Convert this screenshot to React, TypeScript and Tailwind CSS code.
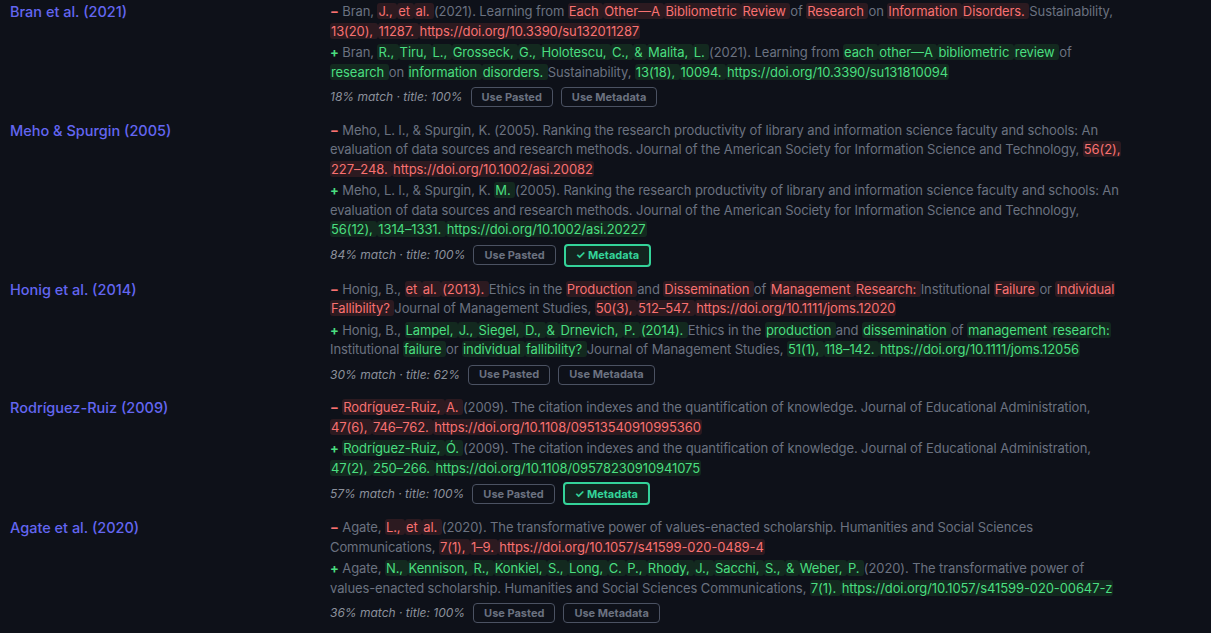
import React from 'react';

type Seg = [string, boolean];

interface Entry {
  label: string;
  removed: Seg[];
  added: Seg[];
  match: string;
  picked: 'metadata' | null;
}

const entries: Entry[] = [
  {
    label: 'Bran et al. (2021)',
    removed: [
      ['Bran, ', false],
      ['J., et al. ', true],
      ['(2021). Learning from ', false],
      ['Each Other—A Bibliometric Review ', true],
      ['of ', false],
      ['Research ', true],
      ['on ', false],
      ['Information Disorders. ', true],
      ['Sustainability, ', false],
      ['13(20), 11287. https://doi.org/10.3390/su132011287', true],
    ],
    added: [
      ['Bran, ', false],
      ['R., Tiru, L., Grosseck, G., Holotescu, C., & Malita, L. ', true],
      ['(2021). Learning from ', false],
      ['each other—A bibliometric review ', true],
      ['of ', false],
      ['research ', true],
      ['on ', false],
      ['information disorders. ', true],
      ['Sustainability, ', false],
      ['13(18), 10094. https://doi.org/10.3390/su131810094', true],
    ],
    match: '18% match · title: 100%',
    picked: null,
  },
  {
    label: 'Meho & Spurgin (2005)',
    removed: [
      [
        'Meho, L. I., & Spurgin, K. (2005). Ranking the research productivity of library and information science faculty and schools: An evaluation of data sources and research methods. Journal of the American Society for Information Science and Technology, ',
        false,
      ],
      ['56(2), 227–248. https://doi.org/10.1002/asi.20082', true],
    ],
    added: [
      ['Meho, L. I., & Spurgin, K. ', false],
      ['M. ', true],
      [
        '(2005). Ranking the research productivity of library and information science faculty and schools: An evaluation of data sources and research methods. Journal of the American Society for Information Science and Technology, ',
        false,
      ],
      ['56(12), 1314–1331. https://doi.org/10.1002/asi.20227', true],
    ],
    match: '84% match · title: 100%',
    picked: 'metadata',
  },
  {
    label: 'Honig et al. (2014)',
    removed: [
      ['Honig, B., ', false],
      ['et al. (2013). ', true],
      ['Ethics in the ', false],
      ['Production ', true],
      ['and ', false],
      ['Dissemination ', true],
      ['of ', false],
      ['Management Research: ', true],
      ['Institutional ', false],
      ['Failure ', true],
      ['or ', false],
      ['Individual Fallibility? ', true],
      ['Journal of Management Studies, ', false],
      ['50(3), 512–547. https://doi.org/10.1111/joms.12020', true],
    ],
    added: [
      ['Honig, B., ', false],
      ['Lampel, J., Siegel, D., & Drnevich, P. (2014). ', true],
      ['Ethics in the ', false],
      ['production ', true],
      ['and ', false],
      ['dissemination ', true],
      ['of ', false],
      ['management research: ', true],
      ['Institutional ', false],
      ['failure ', true],
      ['or ', false],
      ['individual fallibility? ', true],
      ['Journal of Management Studies, ', false],
      ['51(1), 118–142. https://doi.org/10.1111/joms.12056', true],
    ],
    match: '30% match · title: 62%',
    picked: null,
  },
  {
    label: 'Rodríguez-Ruiz (2009)',
    removed: [
      ['Rodríguez-Ruiz, A. ', true],
      ['(2009). The citation indexes and the quantification of knowledge. Journal of Educational Administration, ', false],
      ['47(6), 746–762. https://doi.org/10.1108/09513540910995360', true],
    ],
    added: [
      ['Rodríguez-Ruiz, Ó. ', true],
      ['(2009). The citation indexes and the quantification of knowledge. Journal of Educational Administration, ', false],
      ['47(2), 250–266. https://doi.org/10.1108/09578230910941075', true],
    ],
    match: '57% match · title: 100%',
    picked: 'metadata',
  },
  {
    label: 'Agate et al. (2020)',
    removed: [
      ['Agate, ', false],
      ['L., et al. ', true],
      ['(2020). The transformative power of values-enacted scholarship. Humanities and Social Sciences Communications, ', false],
      ['7(1), 1–9. https://doi.org/10.1057/s41599-020-0489-4', true],
    ],
    added: [
      ['Agate, ', false],
      ['N., Kennison, R., Konkiel, S., Long, C. P., Rhody, J., Sacchi, S., & Weber, P. ', true],
      ['(2020). The transformative power of values-enacted scholarship. Humanities and Social Sciences Communications, ', false],
      ['7(1). https://doi.org/10.1057/s41599-020-00647-z', true],
    ],
    match: '36% match · title: 100%',
    picked: null,
  },
];

function DiffLine({ segs, kind }: { segs: Seg[]; kind: 'del' | 'add' }) {
  const del = kind === 'del';
  return (
    <p className="text-[13px] leading-[19.5px] tracking-[-0.1px] text-[#6b7280]">
      <span className={del ? 'font-bold text-[#f87171]' : 'font-bold text-[#4ade80]'}>{del ? '−' : '+'}</span>{' '}
      {segs.map(([text, hl], i) =>
        hl ? (
          text.split(/(?<= )/).map((word, j) => (
            <span
              key={`${i}-${j}`}
              className={
                del
                  ? 'rounded-[3px] bg-[#2c1a20] px-px text-[#f87171]'
                  : 'rounded-[3px] bg-[#13291f] px-px text-[#4ade80]'
              }
            >
              {/* keep urls from breaking at their hyphens */}
              <span className="whitespace-nowrap">{word.trimEnd()}</span>
              {word.endsWith(' ') ? ' ' : ''}
            </span>
          ))
        ) : (
          <span key={i}>{text}</span>
        ),
      )}
    </p>
  );
}

export default function App() {
  return (
    <div className="min-h-screen overflow-hidden bg-[#0e1119] font-['Inter',sans-serif]">
      <div className="-mt-1">
        {entries.map((e) => (
          <div key={e.label} className="flex pt-1.5 pb-[7.5px]">
            <div className="w-[330px] shrink-0 pl-[10px] text-[14.5px] leading-[19.5px] font-medium text-[#6366f1]">
              {e.label}
            </div>
            <div className="w-[795px]">
              <div className="mb-0.5">
                <DiffLine segs={e.removed} kind="del" />
              </div>
              <DiffLine segs={e.added} kind="add" />
              <div className="mt-[5px] flex min-h-5 items-center gap-2">
                <span className="text-[12px] italic text-[#8b909b]">{e.match}</span>
                <button className="h-5 rounded border border-[#4b5262] px-2.5 text-[11px] font-bold text-[#6b7280]">
                  Use Pasted
                </button>
                {e.picked === 'metadata' ? (
                  <button className="-my-[0.75px] h-[23px] rounded border-2 border-[#34d399] bg-[#13241f] px-2.5 text-[11px] font-bold text-[#34d399]">
                    ✓ Metadata
                  </button>
                ) : (
                  <button className="h-5 rounded border border-[#4b5262] px-2.5 text-[11px] font-bold text-[#6b7280]">
                    Use Metadata
                  </button>
                )}
              </div>
            </div>
          </div>
        ))}
      </div>
    </div>
  );
}
